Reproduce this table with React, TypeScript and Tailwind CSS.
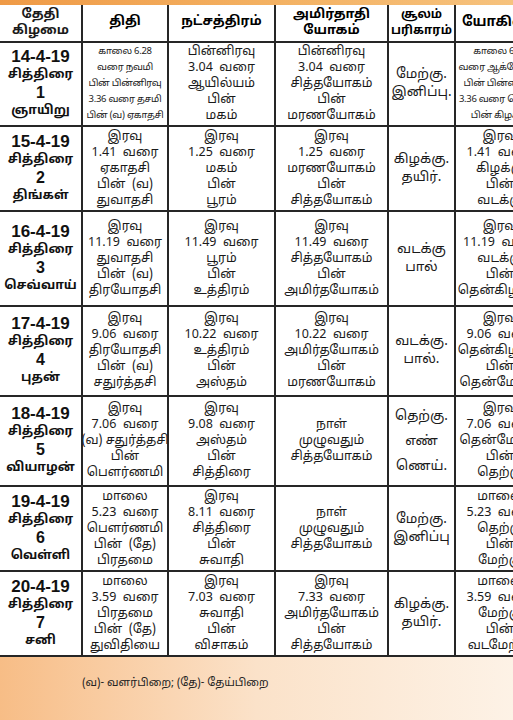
import React from "react";

type Row = {
  date: string;
  month: string;
  day: string;
  weekday: string;
  tithi: string[];
  tithiSmall?: boolean;
  nak: string[];
  amir: string[];
  sool: string[];
  soolWide?: boolean;
  yogi: string[];
  h: string;
};

const rows: Row[] = [
  {
    date: "14-4-19", month: "சித்திரை", day: "1", weekday: "ஞாயிறு",
    tithi: ["காலை 6.28", "வரை நவமி", "பின் பின்னிரவு", "3.36 வரை தசமி", "பின் (வ) ஏகாதசி"],
    tithiSmall: true,
    nak: ["பின்னிரவு", "3.04  வரை", "ஆயில்யம்", "பின்", "மகம்"],
    amir: ["பின்னிரவு", "3.04  வரை", "சித்தயோகம்", "பின்", "மரணயோகம்"],
    sool: ["மேற்கு.", "இனிப்பு."],
    yogi: ["காலை 6.28", "வரை ஆக்னேயம்", "பின் பின்னிரவு", "3.36 வரை தெற்கு", "பின் கிழக்கு"],
    h: "h-[84px]",
  },
  {
    date: "15-4-19", month: "சித்திரை", day: "2", weekday: "திங்கள்",
    tithi: ["இரவு", "1.41  வரை", "ஏகாதசி", "பின்  (வ)", "துவாதசி"],
    nak: ["இரவு", "1.25  வரை", "மகம்", "பின்", "பூரம்"],
    amir: ["இரவு", "1.25  வரை", "மரணயோகம்", "பின்", "சித்தயோகம்"],
    sool: ["கிழக்கு.", "தயிர்."],
    yogi: ["இரவு", "1.41  வரை", "கிழக்கு", "பின்", "வடக்கு"],
    h: "h-[85px]",
  },
  {
    date: "16-4-19", month: "சித்திரை", day: "3", weekday: "செவ்வாய்",
    tithi: ["இரவு", "11.19  வரை", "துவாதசி", "பின்  (வ)", "திரயோதசி"],
    nak: ["இரவு", "11.49  வரை", "பூரம்", "பின்", "உத்திரம்"],
    amir: ["இரவு", "11.49  வரை", "சித்தயோகம்", "பின்", "அமிர்தயோகம்"],
    sool: ["வடக்கு", "பால்"],
    yogi: ["இரவு", "11.19  வரை", "வடக்கு", "பின்", "தென்கிழக்கு"],
    h: "h-[95px]",
  },
  {
    date: "17-4-19", month: "சித்திரை", day: "4", weekday: "புதன்",
    tithi: ["இரவு", "9.06  வரை", "திரயோதசி", "பின்  (வ)", "சதுர்த்தசி"],
    nak: ["இரவு", "10.22  வரை", "உத்திரம்", "பின்", "அஸ்தம்"],
    amir: ["இரவு", "10.22  வரை", "அமிர்தயோகம்", "பின்", "மரணயோகம்"],
    sool: ["வடக்கு.", "பால்."],
    yogi: ["இரவு", "9.06  வரை", "தென்கிழக்கு", "பின்", "தென்மேற்கு"],
    h: "h-[90px]",
  },
  {
    date: "18-4-19", month: "சித்திரை", day: "5", weekday: "வியாழன்",
    tithi: ["இரவு", "7.06  வரை", "(வ) சதுர்த்தசி", "பின்", "பௌர்ணமி"],
    nak: ["இரவு", "9.08  வரை", "அஸ்தம்", "பின்", "சித்திரை"],
    amir: ["நாள்", "முழுவதும்", "சித்தயோகம்"],
    sool: ["தெற்கு.", "எண்", "ணெய்."],
    soolWide: true,
    yogi: ["இரவு", "7.06  வரை", "தென்மேற்கு", "பின்", "தெற்கு"],
    h: "h-[90px]",
  },
  {
    date: "19-4-19", month: "சித்திரை", day: "6", weekday: "வெள்ளி",
    tithi: ["மாலை", "5.23  வரை", "பௌர்ணமி", "பின்  (தே)", "பிரதமை"],
    nak: ["இரவு", "8.11  வரை", "சித்திரை", "பின்", "சுவாதி"],
    amir: ["நாள்", "முழுவதும்", "சித்தயோகம்"],
    sool: ["மேற்கு.", "இனிப்பு"],
    yogi: ["மாலை", "5.23  வரை", "தெற்கு", "பின்", "மேற்கு"],
    h: "h-[85px]",
  },
  {
    date: "20-4-19", month: "சித்திரை", day: "7", weekday: "சனி",
    tithi: ["மாலை", "3.59  வரை", "பிரதமை", "பின்  (தே)", "துவிதியை"],
    nak: ["இரவு", "7.03  வரை", "சுவாதி", "பின்", "விசாகம்"],
    amir: ["இரவு", "7.33  வரை", "அமிர்தயோகம்", "பின்", "சித்தயோகம்"],
    sool: ["கிழக்கு.", "தயிர்."],
    yogi: ["மாலை", "3.59  வரை", "மேற்கு", "பின்", "வடமேற்கு"],
    h: "h-[85px]",
  },
];

const font = {
  fontFamily: '"Noto Sans Tamil", "Lohit Tamil", "Noto Sans", "Liberation Sans", sans-serif',
};
const latin = { fontFamily: '"Liberation Sans", Arial, sans-serif' };

function Lines({ lines, small }: { lines: string[]; small?: boolean }) {
  return (
    <div className={`flex flex-col items-center text-center whitespace-pre ${small ? "text-[9.5px] leading-[16px] tracking-[-0.3px]" : "text-[12.5px] leading-[16px]"} text-[#1a1a1a]`}>
      {lines.map((l, i) => (
        <span key={i}>{l}</span>
      ))}
    </div>
  );
}

const grid = "grid grid-cols-[83px_86px_107px_113px_67px_90px]";
const cell = "flex items-center justify-center border-r-2 border-[#262626] overflow-hidden";

export default function App() {
  return (
    <div className="w-[513px] h-[720px] overflow-hidden relative bg-gradient-to-r from-[#f7bd86] via-[#fbe2c9] to-[#fdf2e6]" style={font}>
      <div className="h-[5px] bg-gradient-to-r from-[#ef9a46] via-[#f3b061] to-[#f6c27d]" />
      <div className="w-[546px] bg-white">
        <div className={`${grid} h-[38px] border-b-2 border-[#262626]`}>
          <div className={`${cell} flex-col`}>
            <span className="text-[13px] leading-[16px] font-bold text-[#1a1a1a]">தேதி</span>
            <span className="text-[13px] leading-[16px] font-bold text-[#1a1a1a]">கிழமை</span>
          </div>
          <div className={cell}><span className="text-[13px] font-bold">திதி</span></div>
          <div className={cell}><span className="text-[13px] font-bold">நட்சத்திரம்</span></div>
          <div className={`${cell} flex-col`}>
            <span className="text-[13px] leading-[16px] font-bold">அமிர்தாதி</span>
            <span className="text-[13px] leading-[16px] font-bold">யோகம்</span>
          </div>
          <div className={`${cell} flex-col`}>
            <span className="text-[12px] leading-[16px] font-bold">சூலம்</span>
            <span className="text-[12px] leading-[16px] font-bold">பரிகாரம்</span>
          </div>
          <div className={`${cell} justify-start pl-[6px]`}><span className="text-[13.5px] font-bold">யோகினி</span></div>
        </div>
        {rows.map((r) => (
          <div key={r.date} className={`${grid} ${r.h} border-b-2 border-[#262626]`}>
            <div className={`${cell} flex-col`}>
              <span className="text-[17px] leading-[19px] font-bold text-[#111]" style={latin}>{r.date}</span>
              <span className="text-[12.5px] leading-[18px] font-bold text-[#111]">{r.month}</span>
              <span className="text-[16px] leading-[18px] font-bold text-[#111]" style={latin}>{r.day}</span>
              <span className="text-[12.5px] leading-[19px] font-bold text-[#111]">{r.weekday}</span>
            </div>
            <div className={cell}><Lines lines={r.tithi} small={r.tithiSmall} /></div>
            <div className={cell}><Lines lines={r.nak} /></div>
            <div className={cell}><Lines lines={r.amir} /></div>
            <div className={cell}>
              <div className={`flex flex-col items-center text-center text-[13.5px] text-[#1a1a1a] ${r.soolWide ? "leading-[25px]" : "leading-[18px]"}`}>
                {r.sool.map((s, i) => (
                  <span key={i}>{s}</span>
                ))}
              </div>
            </div>
            <div className={cell}><Lines lines={r.yogi} small={r.tithiSmall} /></div>
          </div>
        ))}
      </div>
      <div className="pl-[82px] pt-[18px] text-[11px] text-[#222]">(வ)- வளர்பிறை; (தே)- தேய்பிறை</div>
    </div>
  );
}
